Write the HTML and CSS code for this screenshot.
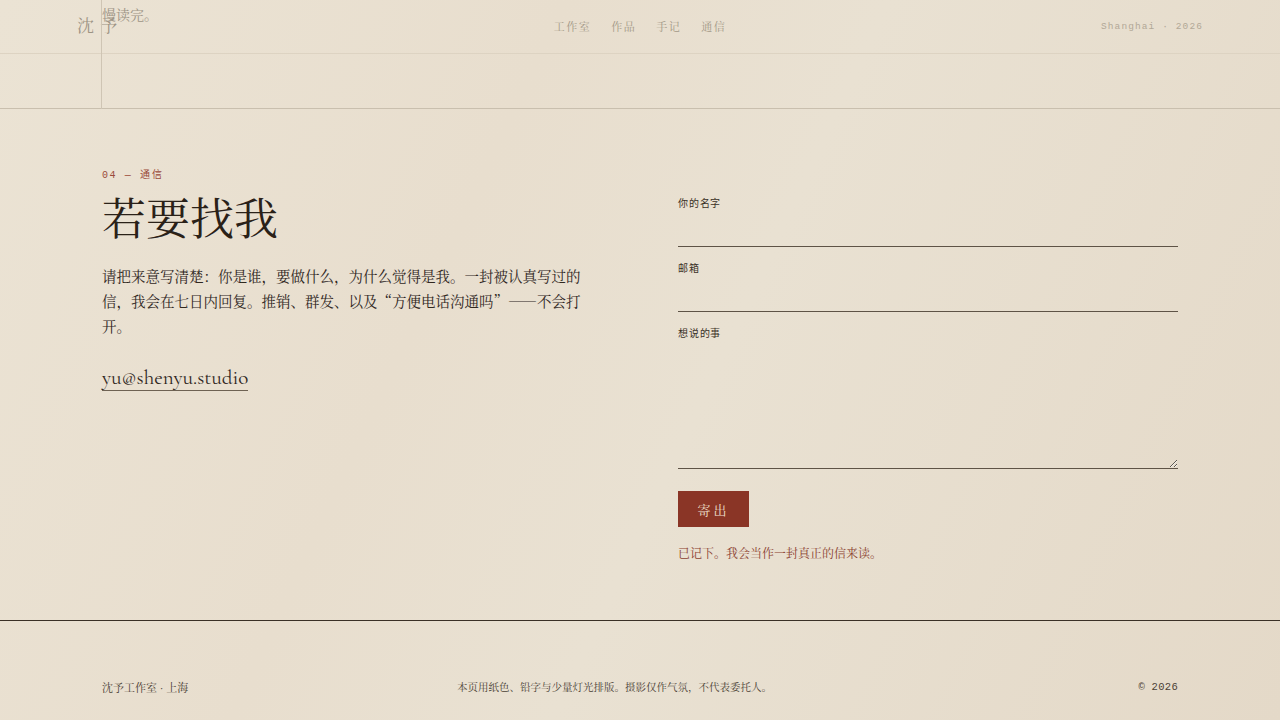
FILE: index.html
```html
<!DOCTYPE html>
<html lang="zh-CN">
<head>
<meta charset="utf-8">
<title>沈予 · 通信</title>
<link rel="stylesheet" href="styles.css">
</head>
<body>
<div class="page">
  <div class="top">
    <header class="header">
      <div class="logo">沈 予</div>
      <nav class="nav">
        <a href="#">工作室</a>
        <a href="#">作品</a>
        <a href="#">手记</a>
        <a href="#">通信</a>
      </nav>
      <div class="place">Shanghai · 2026</div>
    </header>
    <div class="band"></div>
    <span class="tagline">慢读完。</span>
    <span class="vline"></span>
  </div>

  <main class="main">
    <section class="intro">
      <div class="eyebrow">04 — 通信</div>
      <h1 class="title">若要找我</h1>
      <p class="lead">请把来意写清楚：你是谁，要做什么，为什么觉得是我。一封被认真写过的信，我会在七日内回复。推销、群发、以及“方便电话沟通吗”——不会打开。</p>
      <a class="mail" href="#">yu@shenyu.studio</a>
    </section>

    <form class="form">
      <label class="field">
        <span class="label">你的名字</span>
        <input class="input" type="text">
      </label>
      <label class="field">
        <span class="label">邮箱</span>
        <input class="input" type="email">
      </label>
      <label class="field">
        <span class="label">想说的事</span>
        <textarea class="input area"></textarea>
      </label>
      <button class="send" type="button">寄出</button>
      <p class="note">已记下。我会当作一封真正的信来读。</p>
    </form>
  </main>

  <footer class="footer">
    <span class="foot-left">沈予工作室 · 上海</span>
    <span class="foot-mid">本页用纸色、铅字与少量灯光排版。摄影仅作气氛，不代表委托人。</span>
    <span class="foot-right">© 2026</span>
  </footer>
</div>
</body>
</html>
```

FILE: styles.css
```css
* { box-sizing: border-box; }
html, body { margin: 0; padding: 0; }
body {
  width: 1280px;
  height: 720px;
  overflow: hidden;
  background: linear-gradient(115deg, #ebe3d4 0%, #e8dece 35%, #e9e1d2 55%, #e4d9c8 100%);
  color: #2a2118;
  font-family: "Liberation Serif", "Noto Serif CJK SC", "Source Han Serif SC", "AR PL UMing CN", serif;
}
.page { display: flex; flex-direction: column; height: 720px; }

.top { position: relative; }
.header {
  height: 54px;
  padding: 0 77px 2px;
  display: flex;
  align-items: center;
  justify-content: space-between;
  border-bottom: 1px solid #ddd3c2;
}
.logo { font-size: 17px; color: #9c9383; width: 160px; letter-spacing: 1px; margin-top: -2px; }
.nav { display: flex; gap: 20px; }
.nav a {
  color: #a39987;
  text-decoration: none;
  font-size: 11px;
  letter-spacing: 1.5px;
}
.place {
  width: 160px;
  text-align: right;
  font-family: "Liberation Mono", monospace;
  font-size: 9.5px;
  letter-spacing: 1.1px;
  color: #b2a897;
  margin-top: 1px;
}
.band { height: 55px; border-bottom: 1px solid #c9bfae; }
.tagline {
  position: absolute;
  left: 102px;
  top: 4px;
  font-size: 14px;
  color: #9e9586;
}
.vline {
  position: absolute;
  left: 101px;
  top: 0;
  width: 1px;
  height: 109px;
  background: #cfc5b4;
}

.main {
  flex: 1;
  display: grid;
  grid-template-columns: 480px 500px;
  column-gap: 96px;
  padding: 60px 0 0 102px;
  border-bottom: 1px solid #3a3026;
}
.intro { display: flex; flex-direction: column; align-items: flex-start; }
.eyebrow {
  font-family: "Liberation Mono", monospace;
  font-size: 10px;
  letter-spacing: 1.6px;
  line-height: 14px;
  color: #9a4a3a;
}
.title {
  margin: 10px 0 0;
  font-size: 44px;
  font-weight: 400;
  line-height: 56px;
  color: #2a2118;
}
.lead {
  margin: 14px 0 0;
  width: 480px;
  font-family: "Noto Serif CJK SC", "Source Han Serif SC", serif;
  font-size: 14.5px;
  line-height: 25px;
  color: #30271e;
}
.mail {
  display: inline-block;
  margin-top: 28px;
  font-family: "Cormorant Garamond", "EB Garamond", "Liberation Serif", serif;
  font-size: 21px;
  color: #2f261d;
  text-decoration: none;
  border-bottom: 1px solid #6e6253;
  line-height: 24px;
}

.form { display: flex; flex-direction: column; align-items: flex-start; padding-top: 29px; }
.field { display: flex; flex-direction: column; width: 500px; margin-bottom: 16px; }
.label {
  font-family: "Liberation Mono", monospace;
  font-size: 10px;
  line-height: 14px;
  letter-spacing: 0.8px;
  color: #3a3026;
}
.input {
  margin-top: 4px;
  height: 31px;
  background: transparent;
  border: 0;
  border-bottom: 1px solid #5e5346;
  outline: none;
  font: inherit;
}
.area { height: 123px; resize: vertical; }
.send {
  margin-top: 6px;
  width: 71px;
  height: 36px;
  border: 0;
  background: #8a3526;
  color: #f1e2d2;
  font-family: inherit;
  font-size: 13px;
  letter-spacing: 3px;
  padding-left: 6px;
}
.note {
  margin: 19px 0 0;
  font-size: 12px;
  line-height: 17px;
  color: #8b3f30;
}

.footer {
  height: 99px;
  display: grid;
  grid-template-columns: 355px 1fr auto;
  align-items: center;
  padding: 32px 102px 0 102px;
  font-size: 10.5px;
  color: #4a4034;
}
.foot-left { font-size: 11px; }
.foot-right { font-family: "Liberation Mono", monospace; font-size: 10.5px; letter-spacing: 0.3px; }
```
